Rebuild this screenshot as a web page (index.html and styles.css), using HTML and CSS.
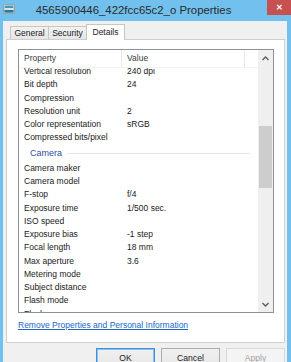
FILE: index.html
```html
<!DOCTYPE html>
<html lang="en">
<head>
    <meta charset="UTF-8">
    <meta name="viewport" content="width=device-width, initial-scale=1.0">
    <title>4565900446_422fcc65c2_o Properties</title>
    <link rel="stylesheet" href="styles.css">
</head>
<body>

    <div class="window">
        <!-- Title bar -->
        <div class="titlebar">
            <svg class="app-icon" width="12" height="10" viewBox="0 0 12 10">
                <rect x="0.5" y="0.5" width="11" height="9" fill="#f4f4f4" stroke="#9aa3ad"/>
                <rect x="1.5" y="1.5" width="9" height="7" fill="#3d9bb8"/>
                <rect x="1.5" y="4" width="9" height="2" fill="#cfe8ee"/>
                <rect x="1.5" y="6" width="9" height="2.5" fill="#2c7a96"/>
            </svg>
            <div class="title">4565900446_422fcc65c2_o Properties</div>
            <div class="close">&#x2715;</div>
        </div>

        <div class="body">
            <!-- Tabs -->
            <div class="tabs">
                <div class="tab">General</div>
                <div class="tab">Security</div>
                <div class="tab active">Details</div>
            </div>

            <div class="panel">
                <div class="list">
                    <div class="list-main">
                        <div class="list-header">
                            <div class="col-prop">Property</div>
                            <div class="col-value">Value</div>
                            <div class="col-fill"></div>
                        </div>
                        <div class="list-body">
                            <div class="rows">
                                <div class="row"><span>Vertical resolution</span><span>240 dpi</span></div>
                                <div class="row"><span>Bit depth</span><span>24</span></div>
                                <div class="row"><span>Compression</span><span></span></div>
                                <div class="row"><span>Resolution unit</span><span>2</span></div>
                                <div class="row"><span>Color representation</span><span>sRGB</span></div>
                                <div class="row"><span>Compressed bits/pixel</span><span></span></div>
                                <div class="group">
                                    <span class="group-name">Camera</span>
                                    <span class="group-line"></span>
                                </div>
                                <div class="row"><span>Camera maker</span><span></span></div>
                                <div class="row"><span>Camera model</span><span></span></div>
                                <div class="row"><span>F-stop</span><span>f/4</span></div>
                                <div class="row"><span>Exposure time</span><span>1/500 sec.</span></div>
                                <div class="row"><span>ISO speed</span><span></span></div>
                                <div class="row"><span>Exposure bias</span><span>-1 step</span></div>
                                <div class="row"><span>Focal length</span><span>18 mm</span></div>
                                <div class="row"><span>Max aperture</span><span>3.6</span></div>
                                <div class="row"><span>Metering mode</span><span></span></div>
                                <div class="row"><span>Subject distance</span><span></span></div>
                                <div class="row"><span>Flash mode</span><span></span></div>
                                <div class="row"><span>Flash energy</span><span></span></div>
                            </div>
                        </div>
                    </div>

                    <!-- Vertical scrollbar -->
                    <div class="scrollbar">
                        <div class="arrow">
                            <svg width="7" height="5" viewBox="0 0 7 5"><polyline points="0.5,4 3.5,1 6.5,4" fill="none" stroke="#5a5a5a" stroke-width="1.3"/></svg>
                        </div>
                        <div class="track">
                            <div class="thumb"></div>
                        </div>
                        <div class="arrow">
                            <svg width="7" height="5" viewBox="0 0 7 5"><polyline points="0.5,1 3.5,4 6.5,1" fill="none" stroke="#5a5a5a" stroke-width="1.3"/></svg>
                        </div>
                    </div>
                </div>

                <a class="remove-link" href="#">Remove Properties and Personal Information</a>
            </div>

            <div class="buttons">
                <button class="btn default">OK</button>
                <button class="btn">Cancel</button>
                <button class="btn" disabled>Apply</button>
            </div>
        </div>
    </div>

</body>
</html>
```

FILE: styles.css
```css
body {
    margin: 0;
    padding: 0;
    font-family: "Liberation Sans", Arial, sans-serif;
    font-size: 8.5px;
    color: #1a1a1a;
    overflow: hidden;
}

.window {
    width: 291px;
    height: 362px;
    background-color: #71c0ee;
    overflow: hidden;
}

/* Title bar */
.titlebar {
    height: 21px;
    display: flex;
    align-items: flex-start;
}

.app-icon {
    margin: 4px 0 0 3px;
    flex-shrink: 0;
}

.title {
    flex: 1;
    text-align: center;
    font-size: 11.4px;
    line-height: 21px;
    color: #2b2b2b;
    margin-left: -15px;
}

.close {
    width: 24px;
    height: 15px;
    background-color: #c75050;
    color: #fff;
    font-size: 8px;
    font-weight: bold;
    line-height: 15px;
    text-align: center;
    flex-shrink: 0;
}

/* Dialog body */
.body {
    margin: 0 4px 0 3px;
    height: 341px;
    background-color: #f0f0f0;
    padding-top: 3px;
    box-sizing: border-box;
}

.tabs {
    display: flex;
    align-items: flex-end;
    height: 15px;
    padding-left: 7px;
}

.tab {
    height: 13px;
    box-sizing: border-box;
    width: 39px;
    border: 1px solid #c6c6c6;
    border-bottom: 0;
    background: linear-gradient(#f2f2f2, #e6e6e6);
    text-align: center;
    line-height: 12px;
    margin-left: -1px;
}

.tab:first-child {
    margin-left: 0;
}

.tab.active {
    height: 16px;
    margin-bottom: -1px;
    background: #fff;
    line-height: 14px;
    position: relative;
    z-index: 1;
}

.panel {
    margin: 0 2px 0 3px;
    background: #fff;
    border: 1px solid #cfcfcf;
    padding: 9px 0 11px 11px;
}

/* List view */
.list {
    width: 256px;
    height: 264px;
    box-sizing: border-box;
    border: 1px solid #8c9099;
    display: flex;
}

.list-main {
    flex: 1;
    display: flex;
    flex-direction: column;
    min-width: 0;
}

.list-header {
    height: 18px;
    display: flex;
    flex-shrink: 0;
    color: #3a3a3a;
    line-height: 17px;
    border-bottom: 1px solid #f3f3f3;
    box-sizing: border-box;
}

.col-prop {
    width: 103px;
    box-sizing: border-box;
    padding-left: 5px;
    border-right: 1px solid #e5e8ee;
}

.col-value {
    width: 123px;
    box-sizing: border-box;
    padding-left: 5px;
    border-right: 1px solid #e5e8ee;
}

.col-fill {
    flex: 1;
}

.list-body {
    flex: 1;
    overflow: hidden;
}

.rows {
    margin-top: -2.9px;
}

.row {
    display: grid;
    grid-template-columns: 103px 1fr;
    height: 13.25px;
    line-height: 13.25px;
    white-space: nowrap;
}

.row span {
    padding-left: 5px;
}

.group {
    height: 17.2px;
    display: flex;
    align-items: center;
    padding-left: 11px;
    padding-right: 8px;
}

.group-name {
    color: #2f4d9e;
    font-size: 9px;
}

.group-line {
    flex: 1;
    height: 1px;
    margin-left: 5px;
    background-color: #e2e8f1;
}

/* Scrollbar */
.scrollbar {
    width: 15px;
    display: flex;
    flex-direction: column;
    background-color: #efefef;
}

.arrow {
    height: 16px;
    display: flex;
    align-items: center;
    justify-content: center;
    flex-shrink: 0;
}

.track {
    flex: 1;
    padding: 0 1px;
}

.thumb {
    margin-top: 60px;
    height: 62px;
    background-color: #cdcdcd;
}

.remove-link {
    display: block;
    margin-top: 6px;
    line-height: 12px;
    color: #1a66c4;
    text-decoration: underline;
    width: max-content;
    margin-left: 0;
}

/* Buttons */
.buttons {
    display: flex;
    justify-content: flex-end;
    gap: 6px;
    margin-top: 5px;
    padding-right: 2px;
}

.btn {
    width: 59px;
    height: 23px;
    margin: 0;
    padding: 0 0 4px;
    font-family: inherit;
    font-size: 8.6px;
    color: #1a1a1a;
    background: linear-gradient(#f0f0f0, #e5e5e5);
    border: 1px solid #acacac;
}

.btn.default {
    border-color: #3c8fdc;
    box-shadow: inset 0 0 0 1px #8cc2f0;
}

.btn:disabled {
    background: #f4f4f4;
    border-color: #d9d9d9;
    color: #a3a3a3;
}
```
